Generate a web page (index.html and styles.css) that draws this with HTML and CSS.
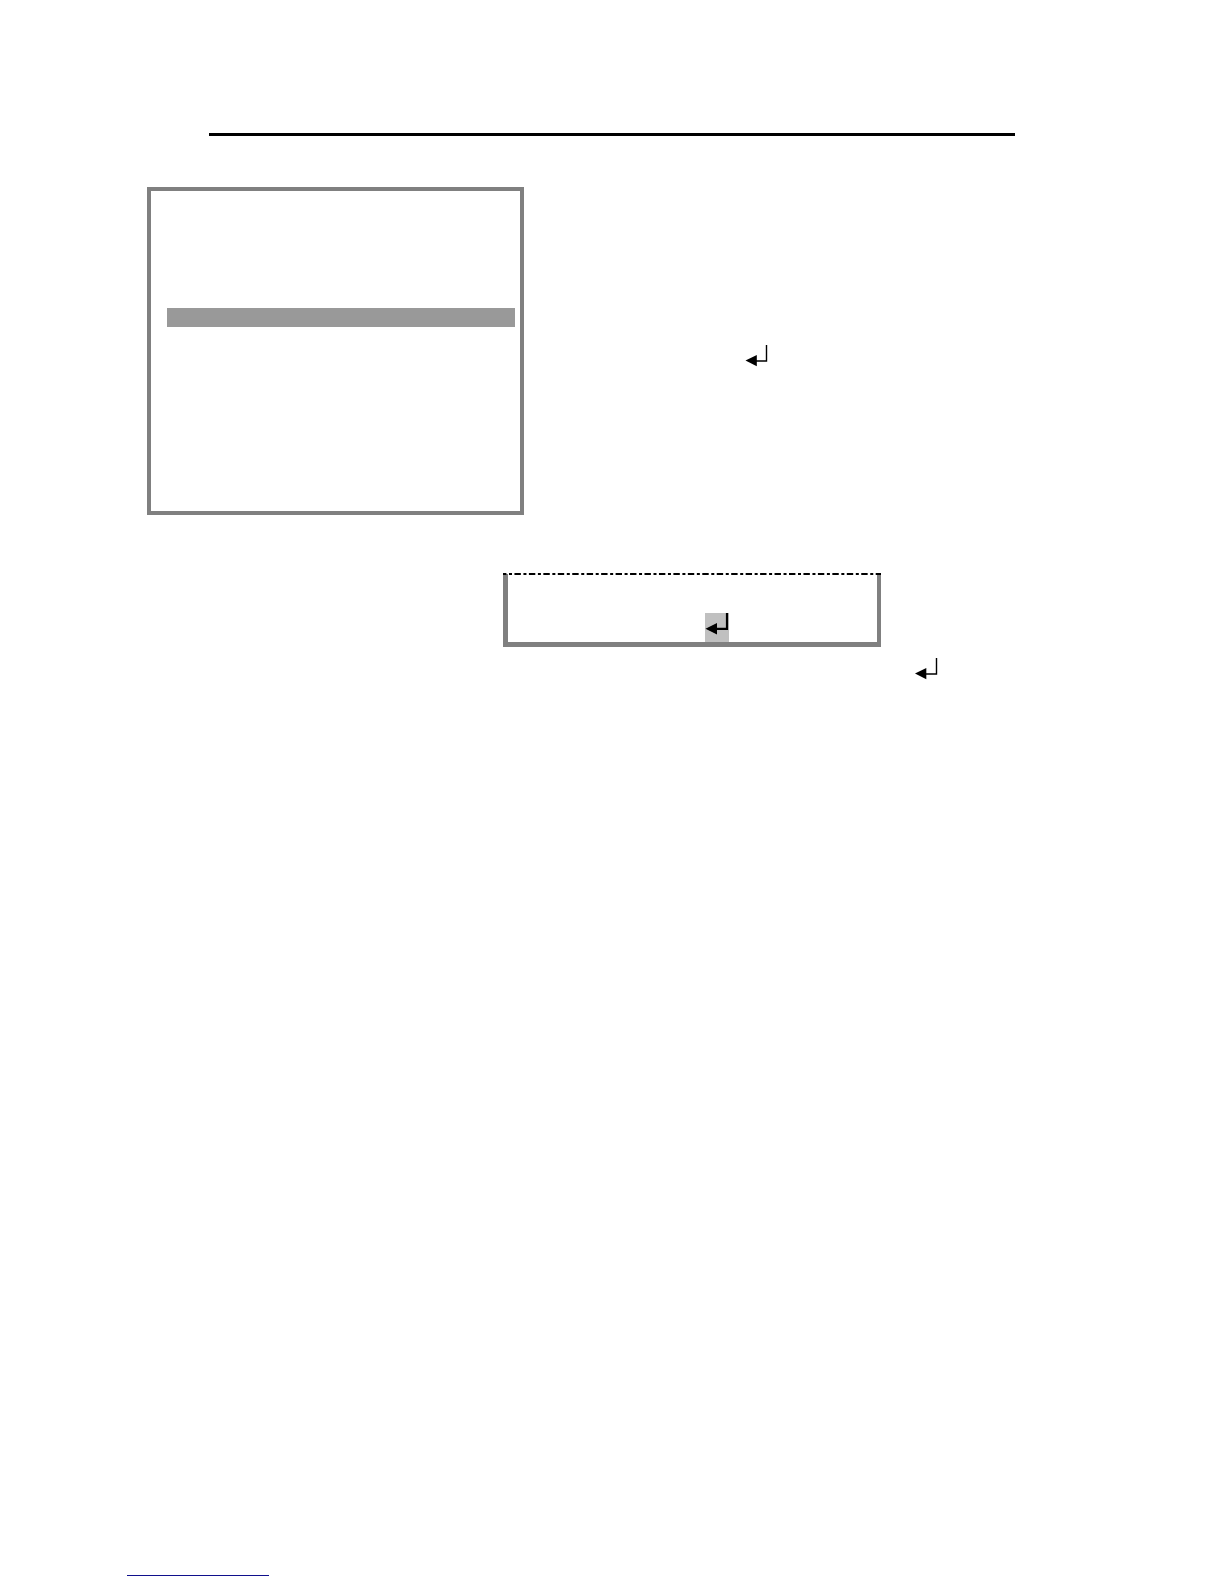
FILE: index.html
```html
<!DOCTYPE html>
<html lang="en">
<head>
  <meta charset="UTF-8">
  <title>Menu page</title>
  <meta name="viewport" content="width=device-width, initial-scale=1.0">
  <link rel="stylesheet" href="styles.css">
</head>
<body>
  <hr class="rule">

  <main>
    <section class="row">
      <div class="screen">
        <div class="selected"></div>
      </div>
      <svg class="enter enter-side" viewBox="0 0 24 22">
        <path class="line" d="M10 16H21.5V0"/>
        <path d="M0.5 15.6L11.8 10V21.3Z"/>
      </svg>
    </section>

    <section class="prompt">
      <!-- dash-dot edge -->
      <svg class="cut">
        <line x1="0" y1="1" x2="100%" y2="1"/>
      </svg>
      <div class="key">
        <svg class="enter" viewBox="0 0 24 22">
          <path class="line bold" d="M10 15.8H22V0"/>
          <path d="M0.5 15.7L12 10V21.4Z"/>
        </svg>
      </div>
    </section>

    <section class="row hint">
      <svg class="enter" viewBox="0 0 24 22">
        <path class="line" d="M10 16H21.5V0"/>
        <path d="M0 15.6L11.3 10V21.3Z"/>
      </svg>
    </section>
  </main>

  <footer>
    <a class="link" href="#"></a>
  </footer>
</body>
</html>
```
FILE: styles.css
```css
* {
  box-sizing: border-box;
}

body {
  display: flex;
  flex-direction: column;
  min-height: 100vh;
  margin: 0;
  background-color: #FFFFFF;
  font-family: "Liberation Sans", sans-serif;
}

.rule {
  align-self: stretch;
  height: 3px;
  margin: 133px 209px 51px;
  border: none;
  background-color: #000000;
}

.row {
  display: flex;
  align-items: flex-start;
  padding-left: 147px;
}

/* menu screen */
.screen {
  width: 377px;
  min-height: 328px;
  padding: 117px 5px 0 16px;
  border: 4px solid #808080;
}

.selected {
  height: 19px;
  background-color: #999999;
}

/* enter key symbol */
.enter {
  display: block;
  flex: none;
  width: 24px;
  height: 22px;
}

.enter-side {
  margin: 158px 0 0 221px;
}

.line {
  fill: none;
  stroke: #000000;
  stroke-width: 1.4;
}

.bold {
  stroke-width: 2.2;
}

/* bottom part of the screen, cut off at the top */
.prompt {
  width: 378px;
  margin: 58px 0 0 503px;
  background: linear-gradient(#808080, #808080) 0 1px / 5px 100% no-repeat,
    linear-gradient(#808080, #808080) 100% 1px / 4px 100% no-repeat;
  border-bottom: 5px solid #808080;
}

.cut {
  display: block;
  width: 100%;
  height: 2px;
}

.cut line {
  stroke: #000000;
  stroke-width: 2;
  stroke-dasharray: 6.4 2.6 3 2.45;
  stroke-dashoffset: 3;
}

.key {
  width: 24px;
  height: 29px;
  margin: 38px 0 0 202px;
  background-color: #C0C0C0;
}

.hint {
  margin-top: 11px;
  padding-left: 915px;
}

footer {
  margin-top: auto;
  padding: 0 0 8px 127px;
}

.link {
  display: block;
  width: 142px;
  border-bottom: 1px solid #10108C;
}
```
